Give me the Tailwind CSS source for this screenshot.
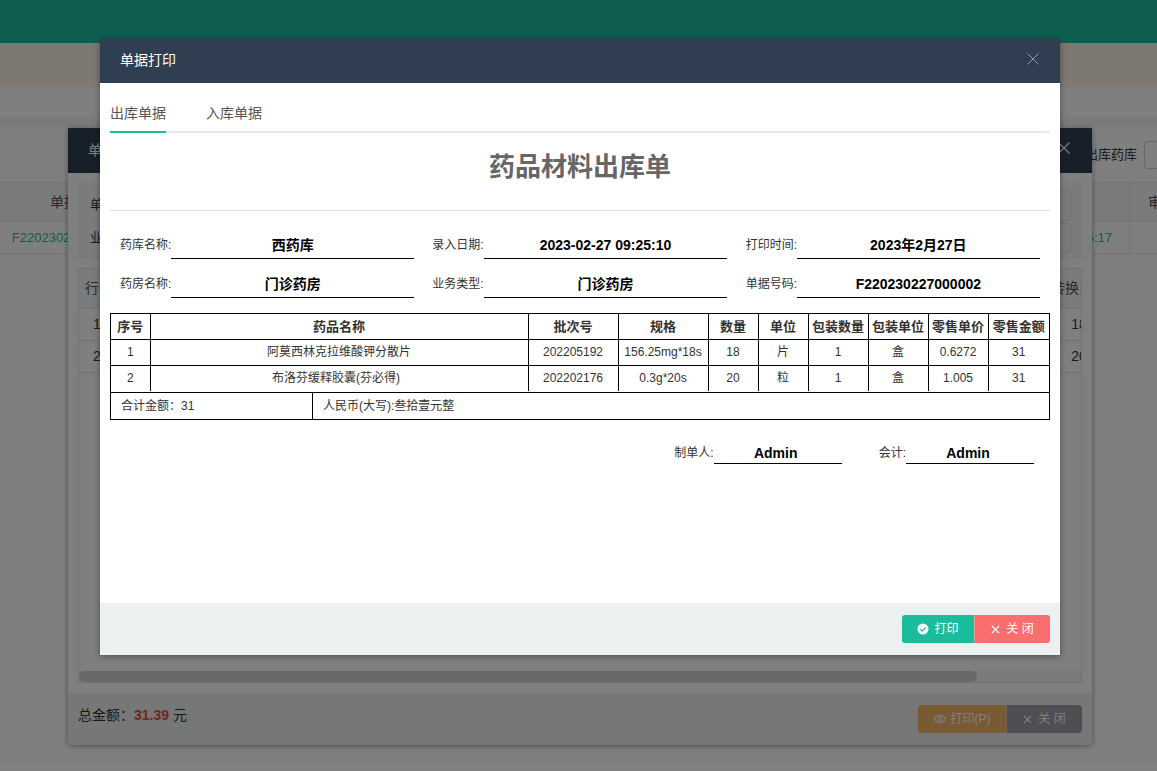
<!DOCTYPE html>
<html lang="zh-CN">

<head>
    <meta charset="UTF-8" />
    <meta name="viewport" content="width=device-width, initial-scale=1.0" />
    <title>单据打印</title>
    <script src="https://cdn.jsdelivr.net/npm/@tailwindcss/browser@4"></script>
</head>

<body class="relative h-[771px] w-[1157px] overflow-hidden bg-white font-['Liberation_Sans','Noto_Sans_CJK_SC',sans-serif] text-[13px] text-[#333]">

    <!-- page behind the dialogs -->
    <div class="h-[43px] bg-[#1abc9c]"></div>
    <div class="h-[44px] bg-[#faf0e2]"></div>
    <div class="h-[30px] bg-white"></div>
    <div class="h-[10px] bg-[#f4f5f7]"></div>
    <div class="flex h-[55px] items-center justify-end">
        <span class="text-[13px]">出库药库</span>
        <span class="ml-[7px] h-[28px] w-[60px] -mr-[47px] rounded border border-[#ccc]"></span>
    </div>
    <div class="flex h-[40px] items-center justify-between border-y border-[#e7e7e7] bg-[#f5f7fa] text-[14px] text-[#555]">
        <span class="pl-[50px]">单据号码</span>
        <span class="flex h-full w-[28px] items-center overflow-hidden whitespace-nowrap border-l border-[#e7e7e7] pl-[18px]">审核状态</span>
    </div>
    <div class="flex h-[32px] items-center justify-between border-b border-[#e7e7e7] text-[#1abc9c]">
        <span class="w-[140px] text-center">F220230227000002</span>
        <span class="mr-[27px] flex h-full w-[146px] items-center justify-end border-r border-[#e7e7e7] pr-[17px]">09:25:17</span>
    </div>

    <!-- first dialog -->
    <div class="absolute left-[68px] top-[128px] flex h-[617px] w-[1024px] flex-col bg-white shadow-[0_1px_6px_rgba(0,0,0,0.4)]">
        <div class="flex h-[45px] items-center justify-between bg-[#2f3e51] px-[20px] text-[14px] text-white">
            <span>单据详情</span>
            <svg class="-mt-[6px] mr-[2px] h-[12px] w-[12px]" viewBox="0 0 12 12" fill="none" stroke="#ffffff" stroke-width="1.1"><path d="M0.5 0.5l11 11M11.5 0.5l-11 11" /></svg>
        </div>
        <div class="flex-1 px-[10px] pt-[10px]">
            <div class="flex h-[76px] flex-col justify-center gap-[2px] bg-[#f5f7fa] pl-[12px] pr-[11px]">
                <div class="flex h-[32px] items-center justify-between"><span>单据号码</span><span class="h-full w-[170px] rounded border border-[#ddd]"></span></div>
                <div class="flex h-[30px] items-center justify-between"><span>业务类型</span><span class="h-full w-[170px] rounded border border-[#ddd]"></span></div>
            </div>
            <div class="mt-[9px] flex h-[415px] flex-col border border-[#e7e7e7]">
                <div class="flex-1 overflow-hidden text-[14px]">
                    <div class="flex h-[40px] w-[1040px] items-center justify-between border-b border-[#e7e7e7] bg-[#f5f7fa] text-[#555]">
                        <span class="w-[40px] text-center whitespace-nowrap">行号</span>
                        <span class="w-[80px] text-center">转换系数</span>
                    </div>
                    <div class="flex h-[32px] w-[1040px] items-center justify-between border-b border-[#e7e7e7]">
                        <span class="w-[36px] text-center">1</span>
                        <span class="w-[80px] text-center">18</span>
                    </div>
                    <div class="flex h-[32px] w-[1040px] items-center justify-between border-b border-[#e7e7e7]">
                        <span class="w-[36px] text-center">2</span>
                        <span class="w-[80px] text-center">20</span>
                    </div>
                </div>
                <div class="h-[11px] bg-[#f4f4f4]">
                    <div class="h-full w-[898px] rounded-full bg-[#d2d2d2]"></div>
                </div>
            </div>
        </div>
        <div class="flex h-[52px] items-center justify-between bg-[#ecf0f1] px-[10px]">
            <span class="mb-[8px] text-[14px]">总金额：<b class="text-[#e74c3c]">31.39</b> 元</span>
            <div class="flex h-[28px] text-[12px] text-white">
                <span class="flex w-[89px] items-center justify-center gap-[5px] rounded-l border-r border-[#f6c98a] bg-[#f0b466]">
                    <svg class="h-[12px] w-[12px]" viewBox="0 0 24 24" fill="none" stroke="currentColor" stroke-width="2.2"><path d="M1 12s4-7.5 11-7.5S23 12 23 12s-4 7.5-11 7.5S1 12 1 12z" /><circle cx="12" cy="12" r="3.5" /></svg>
                    打印(P)
                </span>
                <span class="flex w-[75px] items-center justify-center gap-[6px] rounded-r bg-[#9c9ea4]">
                    <svg class="h-[9px] w-[9px]" viewBox="0 0 10 10" fill="none" stroke="currentColor" stroke-width="1.3"><path d="M1 1l8 8M9 1l-8 8" /></svg>
                    关 闭
                </span>
            </div>
        </div>
    </div>

    <!-- dim layer -->
    <div class="absolute inset-0 bg-black/50"></div>

    <!-- print dialog -->
    <div class="absolute left-[100px] top-[38px] flex h-[617px] w-[960px] flex-col bg-white shadow-[0_1px_6px_rgba(0,0,0,0.4)]">
        <div class="flex h-[45px] shrink-0 items-center justify-between bg-[#2f3e51] px-[20px] text-[14px] text-white">
            <span>单据打印</span>
            <svg class="-mt-[4px] mr-[1px] h-[12px] w-[12px]" viewBox="0 0 12 12" fill="none" stroke="#8f9aa7" stroke-width="1"><path d="M0.5 0.5l11 11M11.5 0.5l-11 11" /></svg>
        </div>

        <div class="flex-1 px-[10px] pt-[10px]">
            <!-- tabs -->
            <div class="flex h-[40px] border-b-2 border-[#e6e9ed] text-[14px] text-[#555]">
                <span class="h-[40px] border-b-2 border-[#1abc9c] pt-[1px] leading-[38px]">出库单据</span>
                <span class="ml-[40px] pt-[1px] leading-[38px]">入库单据</span>
            </div>

            <h1 class="pt-[17px] pb-[26px] text-center text-[26px] font-bold leading-[34px] text-[#666]">药品材料出库单</h1>
            <div class="border-t border-[#e0e0e6]"></div>

            <!-- header fields -->
            <div class="mt-[21px] flex flex-col gap-[12px] px-[10px] text-[12px] text-[#333]">
                <div class="flex">
                    <div class="flex w-[313px] pr-[18px]"><span class="w-[51px] shrink-0 whitespace-nowrap leading-[27px]">药库名称:</span><b class="flex-1 border-b border-black text-center text-[14px] leading-[26px] text-black">西药库</b></div>
                    <div class="flex w-[314px] pr-[19px]"><span class="w-[52px] shrink-0 whitespace-nowrap leading-[27px]">录入日期:</span><b class="flex-1 border-b border-black text-center text-[14px] leading-[26px] text-black">2023-02-27 09:25:10</b></div>
                    <div class="flex w-[295px]"><span class="w-[51px] shrink-0 whitespace-nowrap leading-[27px]">打印时间:</span><b class="flex-1 border-b border-black text-center text-[14px] leading-[26px] text-black">2023年2月27日</b></div>
                </div>
                <div class="flex">
                    <div class="flex w-[313px] pr-[18px]"><span class="w-[51px] shrink-0 whitespace-nowrap leading-[27px]">药房名称:</span><b class="flex-1 border-b border-black text-center text-[14px] leading-[26px] text-black">门诊药房</b></div>
                    <div class="flex w-[314px] pr-[19px]"><span class="w-[52px] shrink-0 whitespace-nowrap leading-[27px]">业务类型:</span><b class="flex-1 border-b border-black text-center text-[14px] leading-[26px] text-black">门诊药房</b></div>
                    <div class="flex w-[295px]"><span class="w-[51px] shrink-0 whitespace-nowrap leading-[27px]">单据号码:</span><b class="flex-1 border-b border-black text-center text-[14px] leading-[26px] text-black">F220230227000002</b></div>
                </div>
            </div>

            <!-- detail table -->
            <div class="mt-[15px] border border-black text-[12px] text-[#333]">
                <table class="w-[938px] table-fixed border-collapse text-center">
                    <colgroup>
                        <col class="w-[39px]" /><col class="w-[378px]" /><col class="w-[90px]" /><col class="w-[90px]" /><col class="w-[50px]" /><col class="w-[50px]" /><col class="w-[60px]" /><col class="w-[60px]" /><col class="w-[60px]" /><col class="w-[61px]" />
                    </colgroup>
                    <thead class="text-[13px] font-bold">
                        <tr class="h-[25px] border-b border-black">
                            <th class="border-r border-black">序号</th>
                            <th class="border-r border-black">药品名称</th>
                            <th class="border-r border-black">批次号</th>
                            <th class="border-r border-black">规格</th>
                            <th class="border-r border-black">数量</th>
                            <th class="border-r border-black">单位</th>
                            <th class="border-r border-black">包装数量</th>
                            <th class="border-r border-black">包装单位</th>
                            <th class="border-r border-black">零售单价</th>
                            <th>零售金额</th>
                        </tr>
                    </thead>
                    <tbody>
                        <tr class="h-[26px] border-b border-black">
                            <td class="border-r border-black">1</td>
                            <td class="border-r border-black">阿莫西林克拉维酸钾分散片</td>
                            <td class="border-r border-black">202205192</td>
                            <td class="border-r border-black">156.25mg*18s</td>
                            <td class="border-r border-black">18</td>
                            <td class="border-r border-black">片</td>
                            <td class="border-r border-black">1</td>
                            <td class="border-r border-black">盒</td>
                            <td class="border-r border-black">0.6272</td>
                            <td>31</td>
                        </tr>
                        <tr class="h-[26px]">
                            <td class="border-r border-black">2</td>
                            <td class="border-r border-black pr-[6px]">布洛芬缓释胶囊(芬必得)</td>
                            <td class="border-r border-black">202202176</td>
                            <td class="border-r border-black">0.3g*20s</td>
                            <td class="border-r border-black">20</td>
                            <td class="border-r border-black">粒</td>
                            <td class="border-r border-black">1</td>
                            <td class="border-r border-black">盒</td>
                            <td class="border-r border-black">1.005</td>
                            <td>31</td>
                        </tr>
                    </tbody>
                </table>
                <div class="mt-[1px] flex h-[27px] border-t border-black leading-[26px]">
                    <div class="w-[202px] border-r border-black pl-[10px]">合计金额：31</div>
                    <div class="pl-[10px]">人民币(大写):叁拾壹元整</div>
                </div>
            </div>

            <!-- signatures -->
            <div class="mt-[23px] flex justify-end gap-[37px] pr-[16px] text-[12px]">
                <div class="flex"><span class="leading-[20px]">制单人:</span><b class="w-[128px] border-b border-black pr-[4px] text-center text-[14px] leading-[20px] text-black">Admin</b></div>
                <div class="flex"><span class="leading-[20px]">会计:</span><b class="w-[128px] border-b border-black pr-[4px] text-center text-[14px] leading-[20px] text-black">Admin</b></div>
            </div>
        </div>

        <div class="flex h-[52px] shrink-0 items-center justify-end bg-[#ecf0f1] pr-[10px]">
            <div class="flex h-[28px] text-[12px] text-white">
                <span class="flex w-[72px] items-center justify-center gap-[5px] rounded-l-[3px] bg-[#1abc9c]">
                    <svg class="h-[12px] w-[12px]" viewBox="0 0 12 12"><circle cx="6" cy="6" r="5.5" fill="#fff" /><path d="M3.2 6.2l2 2L8.8 4.4" fill="none" stroke="#1abc9c" stroke-width="1.2" /></svg>
                    打印
                </span>
                <span class="flex w-[76px] items-center justify-center gap-[6px] rounded-r-[3px] border-l border-[#f5a08a] bg-[#fa6e70]">
                    <svg class="h-[9px] w-[9px]" viewBox="0 0 10 10" fill="none" stroke="currentColor" stroke-width="1.3"><path d="M1 1l8 8M9 1l-8 8" /></svg>
                    关 闭
                </span>
            </div>
        </div>
    </div>
</body>

</html>
